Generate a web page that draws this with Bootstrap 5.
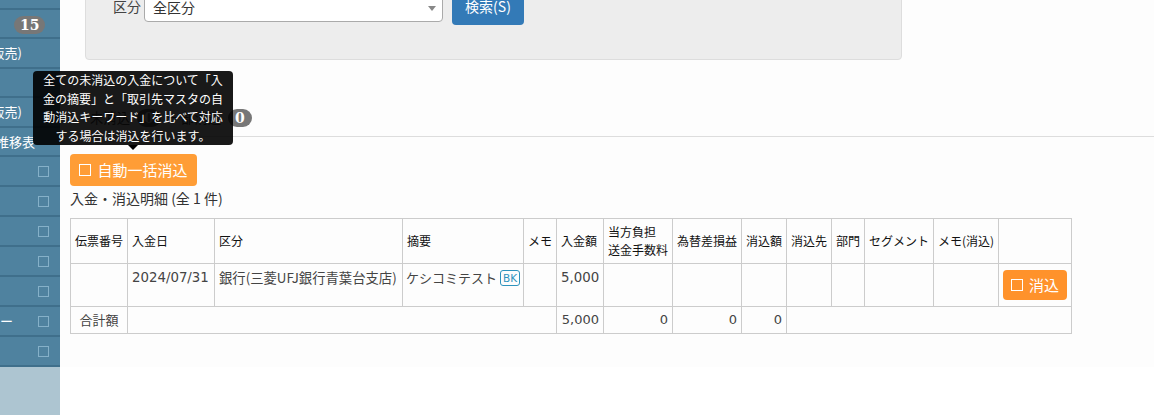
<!DOCTYPE html>
<html lang="ja"><head><meta charset="utf-8">
<link rel="stylesheet" href="https://cdn.jsdelivr.net/npm/bootstrap@5.3.0/dist/css/bootstrap.min.css">
<style>
html,body{height:415px;overflow:hidden;background:#fff}
body{font-family:"DejaVu Sans","Noto Sans CJK JP",sans-serif;font-size:13px;color:#333}
.shell{height:415px}
.side{width:60px;background:#adc5d1;flex:none;overflow:hidden;color:#fff}
.side-list{background:#4f829f;margin-top:-20px}
.side-row{height:30px;border-bottom:2px solid #3f6f8b;display:flex;align-items:center;white-space:nowrap;font-size:13px;position:relative;font-family:"Noto Sans CJK JP",sans-serif}
.side-row.h29{height:29px}
.side-row .lbl{position:absolute;right:38px}
.side-row .lbl.wide{right:25px}
.side-row .lbl.flush{right:auto;left:0}
.side-box{margin-left:auto;margin-right:11px;width:11px;height:11px;border:1.5px solid #85b0c8}
.num{background:#777;color:#fff;border-radius:10px;font:700 14px "DejaVu Serif",serif;padding:1px 7px;display:inline-block;line-height:16px;min-width:20px;text-align:center}
.side-row .num{margin-left:14px;margin-top:2px;padding:1px 6px;width:31px}
.mainp{flex:1;min-width:0}
.paper{background:#fdfdfd;height:382px;margin-top:-15px}
.search{margin-left:25px;width:817px;height:75px;background:#ededed;border:1px solid #ddd;border-radius:4px;padding:0 0 0 27px;display:flex;gap:9px;align-items:flex-start}
.lab{margin-top:10px;width:22px;flex:none;white-space:nowrap;color:#444;font-family:"Noto Sans CJK JP",sans-serif;font-size:14px;line-height:20px}
.pick{margin-top:4px;width:299px;height:32px;border:1px solid #aaa;border-radius:4px;background:#fff;padding:6px 8px 0;line-height:20px;font-size:14px;font-family:"Noto Sans CJK JP",sans-serif;position:relative}
.pick::after{content:"";position:absolute;right:6px;top:15px;border:4px solid transparent;border-top:5px solid #888;border-bottom:0}
.find{margin-top:4px;height:35px;width:72px;background:#337ab7;color:#fff;border:0;border-radius:4px;font-size:14px;font-family:"Noto Sans CJK JP",sans-serif;padding:0 0 2px}
.tabs{height:77px;border-bottom:1px solid #ddd;padding:40px 0 0 30px;display:flex;align-items:center;font-size:13.33px;font-family:"Noto Sans CJK JP",sans-serif;color:#555}
.tabs .gap1{margin:0 7px}
.body-pad{padding:17px 0 0 10px}
.orange{background:#ff9d36;color:#fff;border:0;border-radius:4px;height:32px;width:127px;font-size:15px;font-family:"Noto Sans CJK JP",sans-serif;padding:0;display:flex;align-items:center;justify-content:center;gap:6px}
.sq{width:12px;height:12px;border:1.5px solid #fff;display:inline-block}
.cap{margin:2px 0 10px;line-height:20px;font-family:"Noto Sans CJK JP",sans-serif;font-size:14px;color:#333}
.sheet{table-layout:fixed;border-collapse:collapse;width:1001px;margin:0;font-family:"Noto Sans CJK JP",sans-serif;font-size:12px;color:#111;background:#fdfdfd}
.sheet td,.sheet th{border:1px solid #ccc;padding:0 4px;font-weight:400;line-height:18px;white-space:nowrap;overflow:hidden;vertical-align:middle;background:transparent}
.sheet tr.r1{height:45px}.sheet tr.r2{height:43px}.sheet tr.r3{height:27px}
.sheet tr.r2 td{vertical-align:top;padding-top:5px;color:#444;font-size:13.33px}
.sheet tr.r2 td.act{padding:6px 4px 0}
.sheet tr.r2 td.memo{font-size:13px;padding-left:3px}
.sheet .n{text-align:right;font-family:"DejaVu Sans",sans-serif;font-size:13px;color:#444}
.sheet .d{font-family:"DejaVu Sans",sans-serif}
.sheet .c{text-align:center;color:#444;font-size:13px}
.bk{display:inline-block;border:1px solid #2e93bd;border-radius:3px;font:10.5px/14px "DejaVu Sans",sans-serif;color:#2e93bd;padding:0 2px;margin-left:0;vertical-align:1px}
.orange.mini{width:64px;height:30px;background:#ff922b}
.tip{position:absolute;left:33px;top:71px;width:200px;height:74px;background:rgba(0,0,0,.9);color:#fff;border-radius:4px;font-family:"Noto Sans CJK JP",sans-serif;font-size:12px;line-height:18.6px;text-align:center;padding:0 10px;z-index:5}
.tip::after{content:"";position:absolute;left:95px;top:100%;border:5px solid transparent;border-top-color:#000;border-bottom:0}
</style></head><body>
<div class="shell d-flex">
 <div class="side">
  <div class="side-list">
   <div class="side-row"></div>
   <div class="side-row h29"><span class="num">15</span></div>
   <div class="side-row"><span class="lbl">販売)</span></div>
   <div class="side-row h29"></div>
   <div class="side-row"><span class="lbl">販売)</span></div>
   <div class="side-row h29"><span class="lbl wide">推移表</span></div>
   <div class="side-row"><i class="side-box"></i></div>
   <div class="side-row"><i class="side-box"></i></div>
   <div class="side-row"><i class="side-box"></i></div>
   <div class="side-row"><i class="side-box"></i></div>
   <div class="side-row"><i class="side-box"></i></div>
   <div class="side-row"><span class="lbl flush">ー</span><i class="side-box"></i></div>
   <div class="side-row"><i class="side-box"></i></div>
  </div>
 </div>
 <div class="mainp">
  <div class="paper">
   <div class="search"><span class="lab">区分</span><div class="pick">全区分</div><button class="find">検索(S)</button></div>
   <div class="tabs"><span>未消込</span><span class="num gap1">0</span><span>一部消込</span><span class="num gap1">0</span></div>
   <div class="body-pad">
    <button class="orange"><i class="sq"></i>自動一括消込</button>
    <div class="cap">入金・消込明細 (全 1 件)</div>
    <table class="sheet">
     <colgroup><col style="width:57px"><col style="width:87px"><col style="width:188px"><col style="width:121px"><col style="width:33px"><col style="width:47px"><col style="width:69px"><col style="width:69px"><col style="width:45px"><col style="width:45px"><col style="width:33px"><col style="width:69px"><col style="width:65px"><col style="width:73px"></colgroup>
     <tr class="r1"><th>伝票番号</th><th>入金日</th><th>区分</th><th>摘要</th><th>メモ</th><th>入金額</th><th>当方負担<br>送金手数料</th><th>為替差損益</th><th>消込額</th><th>消込先</th><th>部門</th><th>セグメント</th><th>メモ(消込)</th><th></th></tr>
     <tr class="r2"><td></td><td class="d">2024/07/31</td><td>銀行(三菱UFJ銀行青葉台支店)</td><td class="memo">ケシコミテスト <span class="bk">BK</span></td><td></td><td class="n">5,000</td><td></td><td></td><td></td><td></td><td></td><td></td><td></td><td class="act"><button class="orange mini"><i class="sq"></i>消込</button></td></tr>
     <tr class="r3"><td class="c">合計額</td><td colspan="4"></td><td class="n">5,000</td><td class="n">0</td><td class="n">0</td><td class="n">0</td><td colspan="5"></td></tr>
    </table>
   </div>
  </div>
 </div>
</div>
<div class="tip">全ての未消込の入金について「入金の摘要」と「取引先マスタの自動消込キーワード」を比べて対応する場合は消込を行います。</div>
</body></html>
